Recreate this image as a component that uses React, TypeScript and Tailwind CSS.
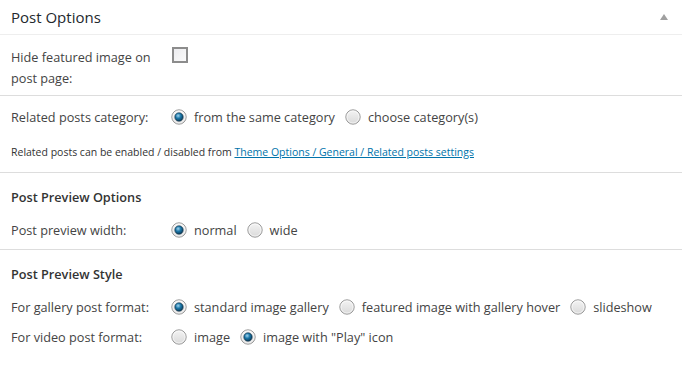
import React, { useState } from 'react';

function Radio({ checked }: { checked: boolean }) {
  return (
    <svg width="16" height="16" viewBox="0 0 16 16" className="shrink-0">
      <defs>
        <linearGradient id="rBg" x1="0" y1="0" x2="0" y2="1">
          <stop offset="0" stopColor="#f4f4f4" />
          <stop offset="1" stopColor="#d9d9d9" />
        </linearGradient>
        <radialGradient id="rDot" cx="0.4" cy="0.35" r="0.7">
          <stop offset="0" stopColor="#9fd3ef" />
          <stop offset="0.45" stopColor="#1b77a8" />
          <stop offset="1" stopColor="#0a3550" />
        </radialGradient>
      </defs>
      <circle cx="8" cy="8" r="7.2" fill="url(#rBg)" stroke="#9a9a9a" strokeWidth="1" />
      <circle cx="8" cy="8" r="6" fill="none" stroke="#ffffff" strokeOpacity="0.7" strokeWidth="0.8" />
      {checked && <circle cx="8" cy="8" r="4.2" fill="url(#rDot)" stroke="#0b2e44" strokeWidth="0.6" />}
    </svg>
  );
}

function RadioRow({ label, options, initial }: { label: string; options: string[]; initial: number }) {
  const [sel, setSel] = useState(initial);
  return (
    <div className="flex items-center h-[21px]">
      <div className="w-[160px] shrink-0">{label}</div>
      <div className="flex items-center">
        {options.map((o, i) => (
          <label key={o} onClick={() => setSel(i)} className="flex items-center mr-[10px] cursor-pointer">
            <Radio checked={sel === i} />
            <span className="ml-[7px]">{o}</span>
          </label>
        ))}
      </div>
    </div>
  );
}

export default function App() {
  const [hide, setHide] = useState(false);

  return (
    <div className="w-[682px] h-[366px] bg-white text-[12.7px] text-[#444] font-['Open_Sans',sans-serif] overflow-hidden">
      <div className="h-[35px] border-b border-[#eeeeee] flex items-center justify-between pl-[11px] pr-[14px]">
        <div className="text-[15px] text-[#23282d]">Post Options</div>
        <div className="w-0 h-0 border-l-[4px] border-r-[4px] border-b-[6px] border-l-transparent border-r-transparent border-b-[#a0a0a0]" />
      </div>

      <div className="border-b border-[#dddddd] pl-[11px] pt-[12px] pb-[6px] flex">
        <div className="w-[161px] shrink-0 leading-[21px]">Hide featured image on<br />post page:</div>
        <div
          onClick={() => setHide(!hide)}
          className="w-[16px] h-[16px] border-2 border-[#8c8c8c] bg-gradient-to-br from-[#ececef] to-[#fafafa] cursor-pointer"
        />
      </div>

      <div className="border-b border-[#dddddd] pl-[11px] pt-[11px] pb-[12px]">
        <RadioRow label="Related posts category:" options={['from the same category', 'choose category(s)']} initial={0} />
        <div className="mt-[16px] text-[10.5px] leading-[16px] text-[#333]">
          Related posts can be enabled / disabled from{' '}
          <a href="#" className="text-[#0073aa] underline">Theme Options / General / Related posts settings</a>
        </div>
      </div>

      <div className="border-b border-[#dddddd] pl-[11px] pt-[14px] pb-[8px]">
        <div className="font-semibold text-[#333] leading-[20px]">Post Preview Options</div>
        <div className="mt-[13px]">
          <RadioRow label="Post preview width:" options={['normal', 'wide']} initial={0} />
        </div>
      </div>

      <div className="pl-[11px] pt-[14px]">
        <div className="font-semibold text-[#333] leading-[20px]">Post Preview Style</div>
        <div className="mt-[13px] flex flex-col gap-[9px]">
          <RadioRow
            label="For gallery post format:"
            options={['standard image gallery', 'featured image with gallery hover', 'slideshow']}
            initial={0}
          />
          <RadioRow label="For video post format:" options={['image', 'image with "Play" icon']} initial={1} />
        </div>
      </div>
    </div>
  );
}
